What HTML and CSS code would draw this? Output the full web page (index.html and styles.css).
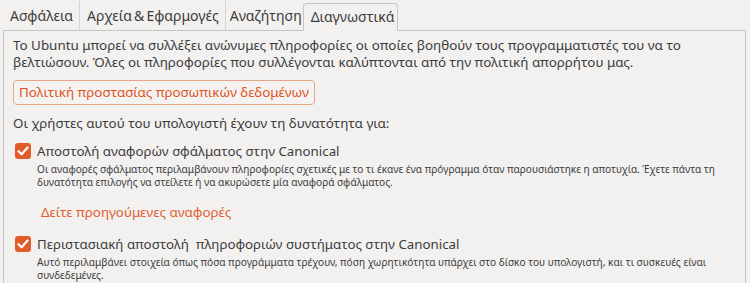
FILE: index.html
```html
<!DOCTYPE html>
<html lang="el">
<head>
    <meta charset="UTF-8">
    <title>Ιδιωτικότητα</title>
    <link rel="stylesheet" href="styles.css">
</head>
<body>
    <div class="tabs">
        <div class="tab">Ασφάλεια</div>
        <div class="tab tight">Αρχεία &amp; Εφαρμογές</div>
        <div class="tab">Αναζήτηση</div>
        <div class="tab active">Διαγνωστικά</div>
    </div>
    <div class="panel">
        <p class="intro">Το Ubuntu μπορεί να συλλέξει ανώνυμες πληροφορίες οι οποίες βοηθούν τους προγραμματιστές του να το βελτιώσουν. Όλες οι πληροφορίες που συλλέγονται καλύπτονται από την πολιτική απορρήτου μας.</p>
        <button class="link-btn">Πολιτική προστασίας προσωπικών δεδομένων</button>
        <p class="lead">Οι χρήστες αυτού του υπολογιστή έχουν τη δυνατότητα για:</p>

        <div class="option">
            <label class="check">
                <span class="box"><svg viewBox="0 0 16 16" width="16" height="16"><path d="M3.5 8.2 L6.6 11.2 L12.6 4.6" fill="none" stroke="#fff" stroke-width="2.2" stroke-linecap="round" stroke-linejoin="round"/></svg></span>
                Αποστολή αναφορών σφάλματος στην Canonical
            </label>
            <p class="desc">Οι αναφορές σφάλματος περιλαμβάνουν πληροφορίες σχετικές με το τι έκανε ένα πρόγραμμα όταν παρουσιάστηκε η αποτυχία. Έχετε πάντα τη δυνατότητα επιλογής να στείλετε ή να ακυρώσετε μία αναφορά σφάλματος.</p>
            <a class="link">Δείτε προηγούμενες αναφορές</a>
        </div>

        <div class="option">
            <label class="check">
                <span class="box"><svg viewBox="0 0 16 16" width="16" height="16"><path d="M3.5 8.2 L6.6 11.2 L12.6 4.6" fill="none" stroke="#fff" stroke-width="2.2" stroke-linecap="round" stroke-linejoin="round"/></svg></span>
                Περιστασιακή αποστολή &nbsp;πληροφοριών συστήματος στην Canonical
            </label>
            <p class="desc">Αυτό περιλαμβάνει στοιχεία όπως πόσα προγράμματα τρέχουν, πόση χωρητικότητα υπάρχει στο δίσκο του υπολογιστή, και τι συσκευές είναι συνδεδεμένες.</p>
        </div>
    </div>
</body>
</html>
```

FILE: styles.css
```css
body {
    font-family: 'Noto Sans', 'Open Sans', sans-serif;
    background-color: #f2f1f0;
    color: #3c3c3c;
    margin: 0;
    padding: 0 4px 0 3px;
    font-size: 13px;
}
.tabs {
    display: flex;
    height: 30px;
    align-items: flex-end;
    border-bottom: 1px solid #c8c6c3;
}
.tab {
    height: 29px;
    line-height: 29px;
    padding: 0 6px 0 7px;
    font-size: 14px;
    color: #3c3c3c;
    border-right: 1px solid #d6d4d1;
}
.tab.tight {
    word-spacing: -1.5px;
}
.tab:nth-child(3) {
    border-right: none;
    padding: 0 1px 0 4px;
}
.tab.active {
    height: 26px;
    line-height: 26px;
    margin-bottom: -1px;
    padding: 0 3px 0 7px;
    background: #f2f1f0;
    border: 1px solid #c8c6c3;
    border-bottom: 1px solid #f2f1f0;
    border-radius: 4px 4px 0 0;
}
.panel {
    border-left: 1px solid #c8c6c3;
    border-right: 1px solid #c8c6c3;
    padding: 6px 9px 20px 9px;
    min-height: 260px;
}
.intro {
    margin: 0;
    line-height: 17px;
    font-size: 13.4px;
}
.link-btn {
    font-family: inherit;
    font-size: 13.4px;
    color: #e0541c;
    background: #f4f3f2;
    border: 1px solid #e9a585;
    border-radius: 4px;
    padding: 2px 5px 3px;
    margin: 9px 0 0 0;
    height: 25px;
}
.lead {
    margin: 10px 0 0 0;
    font-size: 13.4px;
    line-height: 17px;
}
.option {
    margin-top: 10px;
}
.option + .option {
    margin-top: 7px;
}
.check {
    display: flex;
    align-items: center;
    gap: 6px;
    font-size: 13.3px;
    line-height: 18px;
}
.box {
    width: 16px;
    height: 16px;
    margin-left: 2px;
    background: #e05d2b;
    border-radius: 3px;
    display: flex;
}
.desc {
    margin: 3px 0 0 24px;
    font-size: 10.1px;
    line-height: 13px;
}
.link {
    display: block;
    margin: 14px 0 14px 28px;
    font-size: 13.4px;
    color: #e0602e;
}
```
